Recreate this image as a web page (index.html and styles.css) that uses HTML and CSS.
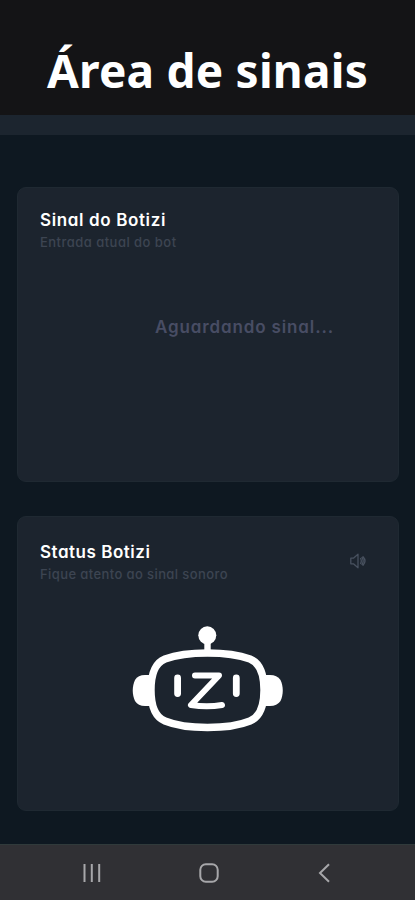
FILE: index.html
```html
<!DOCTYPE html>
<html lang="pt-BR">
<head>
<meta charset="utf-8">
<title>Área de sinais</title>
<link rel="stylesheet" href="styles.css">
</head>
<body>
<div class="app">
  <header class="header"><h1>Área de sinais</h1></header>
  <div class="strip"></div>
  <main class="content">
    <section class="card">
      <h2 class="title-signal">Sinal do Botizi</h2>
      <p class="subtitle sub-signal">Entrada atual do bot</p>
      <p class="waiting">Aguardando sinal...</p>
    </section>
    <section class="card card-status">
      <div class="card-head">
        <div>
          <h2 class="title-status">Status Botizi</h2>
          <p class="subtitle sub-status">Fique atento ao sinal sonoro</p>
        </div>
        <svg class="speaker" width="18" height="18" viewBox="0 0 18 18" fill="none" stroke="currentColor" stroke-width="1.3" stroke-linejoin="round" stroke-linecap="round">
          <path d="M1.800 6.200H4.400L9 2.200V15.800L4.400 11.800H1.800Z"/>
          <path d="M11.600 6.500Q13 9 11.600 11.500M14 4.800Q18 9 14 13.200M13 5.600Q15.400 9 13 12.400"/>
        </svg>
      </div>
      <svg class="robot" width="175" height="130" viewBox="0 0 175 130">
        <g fill="#fff">
          <circle cx="87.3" cy="20.3" r="9"/>
          <rect x="84.3" y="25" width="6.4" height="12"/>
          <path d="M30 60H25Q18 60 15 65C12 71 12 80 15 86Q18 91 25 91H30Z"/>
          <path d="M145 60H150Q157 60 160.500 65C163.500 71 163.500 80 160.500 86Q157 91 150 91H145Z"/>
        </g>
        <g fill="none" stroke="#fff" stroke-linecap="round" stroke-linejoin="round">
          <path stroke-width="7.400" d="M87.500 38C70 38 56 40 45 44C35 48 31 59 31 75C31 91 35 102 45 106C56 110.500 70 112.500 87.500 112.500C105 112.500 119 110.500 130 106C140 102 144 91 144 75C144 59 140 48 130 44C119 40 105 38 87.500 38Z"/>
          <path stroke-width="6.800" d="M57.600 63V78.500M116.300 63V78.500"/>
          <path stroke-width="6" d="M75 60.500H99L71 90Q87 92.500 102 90"/>
        </g>
      </svg>
    </section>
  </main>
  <nav class="navbar">
    <svg width="20" height="20" viewBox="0 0 20 20"><path d="M2.500 1V19M9.800 1V19M17.200 1V19"/></svg>
    <svg width="20" height="20" viewBox="0 0 20 20"><rect x="1.300" y="1.300" width="17.400" height="17.400" rx="5.500"/></svg>
    <svg width="20" height="20" viewBox="0 0 20 20"><path d="M14 1.200L5 10L14 18.800"/></svg>
  </nav>
</div>
</body>
</html>
```
FILE: styles.css
```css
* { box-sizing: border-box; margin: 0; padding: 0; }
body { background: #0e1821; }
.app {
  width: 415px;
  height: 900px;
  display: flex;
  flex-direction: column;
  overflow: hidden;
  font-family: Inter, "Liberation Sans", sans-serif;
  font-feature-settings: "cv11" 1;
}
.header { height: 115px; background: #141416; padding-top: 38px; text-align: center; }
.header h1 {
  font: 700 46px/64px "Noto Sans", sans-serif;
  letter-spacing: 0.2px;
  color: #fff;
  white-space: nowrap;
}
.strip { height: 20px; background: #1c252f; }
.content { flex: 1; padding: 52px 16px 0 17px; display: flex; flex-direction: column; gap: 34px; }
.card {
  height: 295px;
  background: #1c242e;
  border: 1px solid #1f2932;
  border-radius: 9px;
  padding: 20px 22px;
}
h2 { font-size: 17px; line-height: 24px; font-weight: 600; color: #fff; white-space: nowrap; }
.title-signal { letter-spacing: 0.63px; }
.title-status { letter-spacing: 0.52px; }
.subtitle { font-size: 13px; line-height: 20px; font-weight: 500; color: #3d4552; white-space: nowrap; }
.sub-signal { letter-spacing: 0.47px; }
.sub-status { letter-spacing: 0.4px; }
.waiting { margin: 63px 0 0 115px; font-size: 17px; line-height: 24px; font-weight: 600; letter-spacing: 0.87px; color: #484d64; white-space: nowrap; }
.card-status { padding-top: 23px; }
.card-head { display: flex; justify-content: space-between; }
.speaker { color: #48515f; margin: 12px 9px 0 0; }
.robot { display: block; margin: 31px 0 0 80px; }
.navbar {
  height: 56px;
  background: #303034;
  border-top: 1px solid #303a3b;
  display: flex;
  justify-content: space-between;
  align-items: center;
  padding: 0 80px 0 82px;
}
.navbar svg { fill: none; stroke: #a7a7aa; stroke-width: 2; }
```
